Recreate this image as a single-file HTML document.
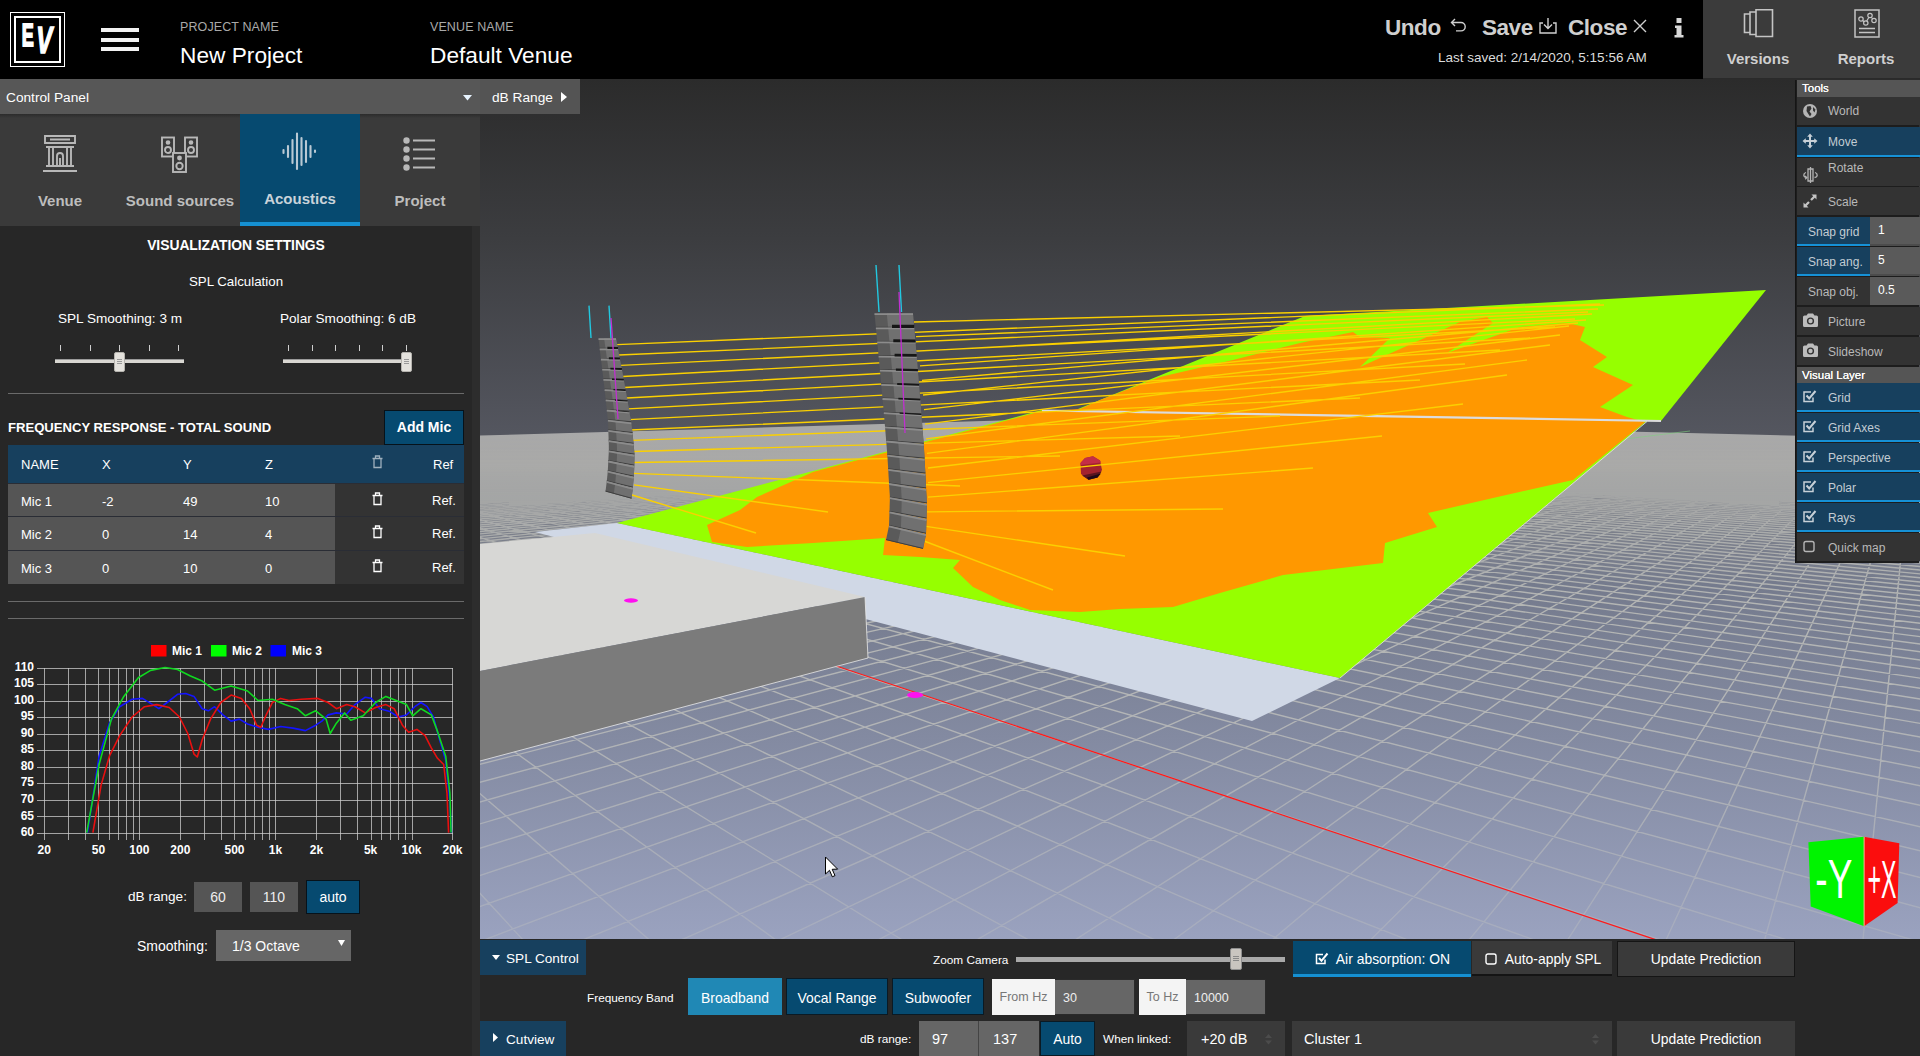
<!DOCTYPE html>
<html><head><meta charset="utf-8"><title>Preview</title>
<style>
*{box-sizing:border-box;margin:0;padding:0}
html,body{width:1920px;height:1056px;overflow:hidden;background:#272727;font-family:"Liberation Sans",sans-serif;color:#fff}
.abs{position:absolute}
#top{position:absolute;left:0;top:0;width:1920px;height:79px;background:#000}
#logo{position:absolute;left:10px;top:12px;width:55px;height:55px;border:1px solid #fff}
#logo i{position:absolute;left:3px;top:3px;right:3px;bottom:3px;border:2px solid #fff;display:block}
#burger b{position:absolute;left:101px;width:38px;height:4px;background:#f2f2f2;display:block}
.lbl{position:absolute;font-size:12.5px;color:#a9a9a9;letter-spacing:.1px;white-space:nowrap}
.val{position:absolute;font-size:22.7px;color:#fff;white-space:nowrap}
.act{position:absolute;top:15px;font-size:22.5px;font-weight:bold;color:#cfcfcf;white-space:nowrap;letter-spacing:-.45px}
#vr{position:absolute;left:1703px;top:0;width:217px;height:79px;background:#3b3b3b}
#vr span{position:absolute;top:50px;font-size:15px;font-weight:bold;color:#cfcfcf;white-space:nowrap;transform:translateX(-50%)}
#cp{position:absolute;left:0;top:79px;width:480px;height:35px;background:#575757;font-size:13.7px;line-height:37px;padding-left:6px}
#dbr{position:absolute;left:480px;top:79px;width:100px;height:35px;background:#545454;font-size:13.7px;line-height:37px;padding-left:12px}
#tabs{position:absolute;left:0;top:114px;width:480px;height:112px;background:#3a3a3a}
.tab{position:absolute;top:0;width:120px;height:112px}
.tab span{position:absolute;left:50%;top:78px;transform:translateX(-50%);font-weight:bold;font-size:15px;color:#bdbdbd;white-space:nowrap}
.tab.on{background:#064a70;border-bottom:4px solid #1590d2}
.tab.on span{top:76px;color:#c9d3da}
#left{position:absolute;left:0;top:226px;width:480px;height:830px;background:#272727}
#left .sb{position:absolute;left:472px;top:0;width:8px;height:830px;background:#2d2d2d}
.c{position:absolute;white-space:nowrap;transform:translateX(-50%)}
.t14{font-size:13.6px}
.hr{position:absolute;left:8px;width:456px;height:1px;background:#6a6a6a}
.trk{position:absolute;height:4px;background:#d9d7d2;border-top:1px solid #9a9a9a}
.tick{position:absolute;top:119px;width:1px;height:6px;background:#cfcfcf}
.thumb{position:absolute;width:11px;height:20px;background:#e4e2dd;border:1px solid #b5b3ae;border-radius:2px}
.thumb:after{content:"";position:absolute;left:2px;top:6px;width:5px;height:1px;background:#999;box-shadow:0 2px 0 #999,0 4px 0 #999}
#mic{position:absolute;left:8px;top:219px;width:456px}
#mic .h{position:absolute;left:0;top:0;width:456px;height:37.5px;background:#17405e}
#mic .r{position:absolute;left:0;width:456px;height:33.7px;background:#333;border-top:1px solid #2a2d35}
#mic .r i{position:absolute;left:0;top:0;width:327px;height:32.7px;background:#555;display:block}
#mic span{position:absolute;font-size:13px;white-space:nowrap;font-style:normal}
.btn{position:absolute;background:#064a70;border:1px solid #06121a;text-align:center;white-space:nowrap}
.inp{position:absolute;background:#555;text-align:center;font-size:14px;color:#eee}
#bot{position:absolute;left:480px;top:939px;width:1440px;height:117px;background:#272727}
#bot .tabb{position:absolute;left:0;height:35px;background:#17405e;font-size:13.6px;line-height:37px;white-space:nowrap}
#bot span.t{position:absolute;font-size:11.8px;white-space:nowrap}
.b2{position:absolute;white-space:nowrap;font-size:13.9px;text-align:center}
#tools{position:absolute;left:1795px;top:80px;width:124px;height:483px;background:#1d1d1d;border-left:1px solid #151515}
#tools .hd{position:absolute;left:1px;width:123px;height:16px;background:#555;font-size:11.5px;line-height:16px;padding-left:5px;color:#fff;text-shadow:0 0 .5px #fff}
#tools .it{position:absolute;left:1px;width:123px;height:28px;background:#333;font-size:12px;line-height:30.5px;color:#b9b9b9;padding-left:31px;white-space:nowrap}
#tools .it.on{background:#17405e;border-bottom:2px solid #1691d6;color:#c3ccd3;line-height:31px;height:29px}
#tools .it svg{position:absolute;left:5px;top:6px}
#tools .sn{padding-left:11px}
#tools .sn b{position:absolute;left:73px;top:0;width:50px;height:28px;background:#5a5a5a;color:#fff;font-weight:normal;padding-left:8px;line-height:26px}
</style></head><body>
<svg class="abs" style="left:480px;top:79px" width="1440" height="860" viewBox="480 79 1440 860">
<defs>
<linearGradient id="sky" x1="0" y1="79" x2="0" y2="434" gradientUnits="userSpaceOnUse"><stop offset="0" stop-color="#2b2b2b"/><stop offset=".45" stop-color="#3c3d40"/><stop offset="1" stop-color="#54565f"/></linearGradient>
<linearGradient id="gnd" x1="0" y1="434" x2="0" y2="939" gradientUnits="userSpaceOnUse"><stop offset="0" stop-color="#a9a9a9"/><stop offset=".06" stop-color="#a0a0a1"/><stop offset=".15" stop-color="#7f828a"/><stop offset=".3" stop-color="#757b8d"/><stop offset=".6" stop-color="#838aa1"/><stop offset="1" stop-color="#9aa2bf"/></linearGradient>
<linearGradient id="gfade" x1="0" y1="434" x2="0" y2="939" gradientUnits="userSpaceOnUse"><stop offset="0" stop-color="#fff" stop-opacity="0"/><stop offset=".06" stop-color="#fff" stop-opacity=".28"/><stop offset=".17" stop-color="#fff" stop-opacity=".66"/><stop offset=".33" stop-color="#fff" stop-opacity=".85"/><stop offset=".55" stop-color="#fff" stop-opacity=".8"/><stop offset="1" stop-color="#fff" stop-opacity=".32"/></linearGradient>
<mask id="gm" maskUnits="userSpaceOnUse" x="480" y="410" width="1440" height="529"><rect x="480" y="410" width="1440" height="529" fill="url(#gfade)"/></mask>
<clipPath id="gc"><polygon points="480,435.5 1078,418.4 1920,438.6 1920,939 480,939"/></clipPath>
<linearGradient id="box1" x1="0" y1="0" x2="1" y2="0"><stop offset="0" stop-color="#4a4a4a"/><stop offset=".35" stop-color="#6e6e6e"/><stop offset="1" stop-color="#5c5c5c"/></linearGradient>
<radialGradient id="sph" cx=".4" cy=".3" r=".8"><stop offset="0" stop-color="#d8474a"/><stop offset=".55" stop-color="#b52a26"/><stop offset="1" stop-color="#5a0c08"/></radialGradient>
</defs>
<rect x="480" y="79" width="1440" height="362" fill="url(#sky)"/>
<rect x="480" y="410" width="1440" height="529" fill="url(#gnd)" clip-path="url(#gc)"/>
<g clip-path="url(#gc)"><g mask="url(#gm)" stroke="#c8c8c0" stroke-width="1.4" fill="none" stroke-opacity=".88">
<path d="M38.5 416L578.6 1000M43.1 416L718.9 1000M47.8 416L859.3 1000M52.4 416L999.6 1000M57.1 416L1140.0 1000M61.7 416L1280.3 1000M66.4 416L1420.6 1000M71.0 416L1561.0 1000M75.7 416L1701.3 1000M80.3 416L1841.7 1000M85.0 416L1982.0 1000M89.6 416L2122.3 1000M94.3 416L2262.7 1000M98.9 416L2403.0 1000M103.6 416L2543.4 1000M108.2 416L2683.7 1000M112.8 416L2824.0 1000M117.5 416L2964.4 1000M122.1 416L3104.7 1000M126.8 416L3245.1 1000M131.4 416L3385.4 1000M136.1 416L3525.8 1000M140.7 416L3666.1 1000M145.4 416L3806.4 1000M150.0 416L3946.8 1000M154.7 416L4087.1 1000M159.3 416L4227.5 1000M164.0 416L4367.8 1000M168.6 416L4508.1 1000M173.3 416L4648.5 1000M177.9 416L4788.8 1000M182.6 416L4929.2 1000M187.2 416L5069.5 1000M191.8 416L5209.8 1000M196.5 416L5350.2 1000M201.1 416L5490.5 1000M205.8 416L5630.9 1000M210.4 416L5771.2 1000M215.1 416L5911.6 1000M219.7 416L6051.9 1000M224.4 416L6192.2 1000M229.0 416L6332.6 1000M233.7 416L6472.9 1000M238.3 416L6613.3 1000M243.0 416L6753.6 1000M247.6 416L6893.9 1000M252.3 416L7034.3 1000M256.9 416L7174.6 1000M261.6 416L7315.0 1000M266.2 416L7455.3 1000M270.8 416L7595.6 1000M275.5 416L7736.0 1000M280.1 416L7876.3 1000M284.8 416L8016.7 1000M289.4 416L8157.0 1000M294.1 416L8297.4 1000M298.7 416L8437.7 1000M303.4 416L8578.0 1000M308.0 416L8718.4 1000M312.7 416L8858.7 1000M317.3 416L8999.1 1000M322.0 416L9139.4 1000M326.6 416L9279.7 1000M331.3 416L9420.1 1000M335.9 416L9560.4 1000M340.6 416L9700.8 1000M345.2 416L9841.1 1000M349.8 416L9981.4 1000M354.5 416L10121.8 1000M359.1 416L10262.1 1000M363.8 416L10402.5 1000M368.4 416L10542.8 1000M373.1 416L10683.2 1000M377.7 416L10823.5 1000M382.4 416L10963.8 1000M387.0 416L11104.2 1000M391.7 416L11244.5 1000M396.3 416L11384.9 1000M401.0 416L11525.2 1000M405.6 416L11665.5 1000M410.3 416L11805.9 1000M414.9 416L11946.2 1000M419.6 416L12086.6 1000M424.2 416L12226.9 1000M428.8 416L12367.2 1000M433.5 416L12507.6 1000M438.1 416L12647.9 1000M442.8 416L12788.3 1000M447.4 416L12928.6 1000M452.1 416L13069.0 1000M456.7 416L13209.3 1000M461.4 416L13349.6 1000M466.0 416L13490.0 1000M470.7 416L13630.3 1000M475.3 416L13770.7 1000M480.0 416L13911.0 1000M484.6 416L14051.3 1000M489.3 416L14191.7 1000M493.9 416L14332.0 1000M498.6 416L14472.4 1000M503.2 416L14612.7 1000M507.8 416L14753.0 1000M512.5 416L14893.4 1000M517.1 416L15033.7 1000M521.8 416L15174.1 1000M526.4 416L15314.4 1000M531.1 416L15454.8 1000M535.7 416L15595.1 1000M540.4 416L15735.4 1000M545.0 416L15875.8 1000M549.7 416L16016.1 1000M554.3 416L16156.5 1000M559.0 416L16296.8 1000M563.6 416L16437.1 1000M568.3 416L16577.5 1000M572.9 416L16717.8 1000M577.6 416L16858.2 1000M582.2 416L16998.5 1000M586.8 416L17138.8 1000M591.5 416L17279.2 1000M596.1 416L17419.5 1000M600.8 416L17559.9 1000M605.4 416L17700.2 1000M610.1 416L17840.6 1000M614.7 416L17980.9 1000M619.4 416L18121.2 1000M624.0 416L18261.6 1000M628.7 416L18401.9 1000M633.3 416L18542.3 1000M638.0 416L18682.6 1000M642.6 416L18822.9 1000M647.3 416L18963.3 1000M651.9 416L19103.6 1000M656.6 416L19244.0 1000M661.2 416L19384.3 1000M665.8 416L19524.6 1000M670.5 416L19665.0 1000M675.1 416L19805.3 1000M679.8 416L19945.7 1000M684.4 416L20086.0 1000M689.1 416L20226.4 1000M693.7 416L20366.7 1000M698.4 416L20507.0 1000M703.0 416L20647.4 1000M707.7 416L20787.7 1000M712.3 416L20928.1 1000M717.0 416L21068.4 1000M721.6 416L21208.7 1000M726.3 416L21349.1 1000M730.9 416L21489.4 1000M735.6 416L21629.8 1000M740.2 416L21770.1 1000M744.8 416L21910.4 1000M749.5 416L22050.8 1000M754.1 416L22191.1 1000M758.8 416L22331.5 1000M763.4 416L22471.8 1000M768.1 416L22612.2 1000M772.7 416L22752.5 1000M777.4 416L22892.8 1000M782.0 416L23033.2 1000M786.7 416L23173.5 1000M791.3 416L23313.9 1000M796.0 416L23454.2 1000M800.6 416L23594.5 1000M805.3 416L23734.9 1000M809.9 416L23875.2 1000M814.6 416L24015.6 1000M819.2 416L24155.9 1000M823.8 416L24296.2 1000M828.5 416L24436.6 1000M833.1 416L24576.9 1000M837.8 416L24717.3 1000M842.4 416L24857.6 1000M847.1 416L24998.0 1000M851.7 416L25138.3 1000M856.4 416L25278.6 1000M861.0 416L25419.0 1000M865.7 416L25559.3 1000M870.3 416L25699.7 1000M875.0 416L25840.0 1000M879.6 416L25980.3 1000M884.3 416L26120.7 1000M888.9 416L26261.0 1000M893.6 416L26401.4 1000M898.2 416L26541.7 1000M902.8 416L26682.0 1000M907.5 416L26822.4 1000M912.1 416L26962.7 1000M916.8 416L27103.1 1000M921.4 416L27243.4 1000M926.1 416L27383.8 1000M930.7 416L27524.1 1000M935.4 416L27664.4 1000M940.0 416L27804.8 1000M944.7 416L27945.1 1000M949.3 416L28085.5 1000M954.0 416L28225.8 1000M958.6 416L28366.1 1000M963.3 416L28506.5 1000M967.9 416L28646.8 1000M972.6 416L28787.2 1000M977.2 416L28927.5 1000M981.8 416L29067.8 1000M986.5 416L29208.2 1000M991.1 416L29348.5 1000M995.8 416L29488.9 1000M1000.4 416L29629.2 1000M1005.1 416L29769.6 1000M1009.7 416L29909.9 1000M1014.4 416L30050.2 1000M1019.0 416L30190.6 1000M1023.7 416L30330.9 1000M1028.3 416L30471.3 1000M1033.0 416L30611.6 1000M1037.6 416L30751.9 1000M1042.3 416L30892.3 1000M1046.9 416L31032.6 1000M1051.6 416L31173.0 1000M1056.2 416L31313.3 1000M1060.8 416L31453.6 1000M1065.5 416L31594.0 1000M1070.1 416L31734.3 1000M1074.8 416L31874.7 1000M1079.4 416L32015.0 1000M1084.1 416L32155.4 1000M1088.7 416L32295.7 1000M1093.4 416L32436.0 1000M1098.0 416L32576.4 1000M1102.7 416L32716.7 1000M1107.3 416L32857.1 1000M1112.0 416L32997.4 1000M1116.6 416L33137.7 1000M1121.3 416L33278.1 1000M1125.9 416L33418.4 1000M1130.6 416L33558.8 1000M1135.2 416L33699.1 1000M1139.8 416L33839.4 1000M1144.5 416L33979.8 1000M1143.7 416L-21437.5 1000M1147.3 416L-21328.1 1000M1150.9 416L-21218.8 1000M1154.5 416L-21109.4 1000M1158.2 416L-21000.0 1000M1161.8 416L-20890.7 1000M1165.4 416L-20781.3 1000M1169.0 416L-20671.9 1000M1172.6 416L-20562.6 1000M1176.3 416L-20453.2 1000M1179.9 416L-20343.8 1000M1183.5 416L-20234.5 1000M1187.1 416L-20125.1 1000M1190.8 416L-20015.8 1000M1194.4 416L-19906.4 1000M1198.0 416L-19797.0 1000M1201.6 416L-19687.7 1000M1205.2 416L-19578.3 1000M1208.9 416L-19468.9 1000M1212.5 416L-19359.6 1000M1216.1 416L-19250.2 1000M1219.7 416L-19140.8 1000M1223.3 416L-19031.5 1000M1227.0 416L-18922.1 1000M1230.6 416L-18812.7 1000M1234.2 416L-18703.4 1000M1237.8 416L-18594.0 1000M1241.4 416L-18484.7 1000M1245.1 416L-18375.3 1000M1248.7 416L-18265.9 1000M1252.3 416L-18156.6 1000M1255.9 416L-18047.2 1000M1259.6 416L-17937.8 1000M1263.2 416L-17828.5 1000M1266.8 416L-17719.1 1000M1270.4 416L-17609.7 1000M1274.0 416L-17500.4 1000M1277.7 416L-17391.0 1000M1281.3 416L-17281.7 1000M1284.9 416L-17172.3 1000M1288.5 416L-17062.9 1000M1292.1 416L-16953.6 1000M1295.8 416L-16844.2 1000M1299.4 416L-16734.8 1000M1303.0 416L-16625.5 1000M1306.6 416L-16516.1 1000M1310.3 416L-16406.7 1000M1313.9 416L-16297.4 1000M1317.5 416L-16188.0 1000M1321.1 416L-16078.6 1000M1324.7 416L-15969.3 1000M1328.4 416L-15859.9 1000M1332.0 416L-15750.6 1000M1335.6 416L-15641.2 1000M1339.2 416L-15531.8 1000M1342.8 416L-15422.5 1000M1346.5 416L-15313.1 1000M1350.1 416L-15203.7 1000M1353.7 416L-15094.4 1000M1357.3 416L-14985.0 1000M1361.0 416L-14875.6 1000M1364.6 416L-14766.3 1000M1368.2 416L-14656.9 1000M1371.8 416L-14547.6 1000M1375.4 416L-14438.2 1000M1379.1 416L-14328.8 1000M1382.7 416L-14219.5 1000M1386.3 416L-14110.1 1000M1389.9 416L-14000.7 1000M1393.5 416L-13891.4 1000M1397.2 416L-13782.0 1000M1400.8 416L-13672.6 1000M1404.4 416L-13563.3 1000M1408.0 416L-13453.9 1000M1411.7 416L-13344.5 1000M1415.3 416L-13235.2 1000M1418.9 416L-13125.8 1000M1422.5 416L-13016.5 1000M1426.1 416L-12907.1 1000M1429.8 416L-12797.7 1000M1433.4 416L-12688.4 1000M1437.0 416L-12579.0 1000M1440.6 416L-12469.6 1000M1444.2 416L-12360.3 1000M1447.9 416L-12250.9 1000M1451.5 416L-12141.5 1000M1455.1 416L-12032.2 1000M1458.7 416L-11922.8 1000M1462.3 416L-11813.5 1000M1466.0 416L-11704.1 1000M1469.6 416L-11594.7 1000M1473.2 416L-11485.4 1000M1476.8 416L-11376.0 1000M1480.5 416L-11266.6 1000M1484.1 416L-11157.3 1000M1487.7 416L-11047.9 1000M1491.3 416L-10938.5 1000M1494.9 416L-10829.2 1000M1498.6 416L-10719.8 1000M1502.2 416L-10610.4 1000M1505.8 416L-10501.1 1000M1509.4 416L-10391.7 1000M1513.0 416L-10282.4 1000M1516.7 416L-10173.0 1000M1520.3 416L-10063.6 1000M1523.9 416L-9954.3 1000M1527.5 416L-9844.9 1000M1531.2 416L-9735.5 1000M1534.8 416L-9626.2 1000M1538.4 416L-9516.8 1000M1542.0 416L-9407.4 1000M1545.6 416L-9298.1 1000M1549.3 416L-9188.7 1000M1552.9 416L-9079.4 1000M1556.5 416L-8970.0 1000M1560.1 416L-8860.6 1000M1563.7 416L-8751.3 1000M1567.4 416L-8641.9 1000M1571.0 416L-8532.5 1000M1574.6 416L-8423.2 1000M1578.2 416L-8313.8 1000M1581.9 416L-8204.4 1000M1585.5 416L-8095.1 1000M1589.1 416L-7985.7 1000M1592.7 416L-7876.3 1000M1596.3 416L-7767.0 1000M1600.0 416L-7657.6 1000M1603.6 416L-7548.3 1000M1607.2 416L-7438.9 1000M1610.8 416L-7329.5 1000M1614.4 416L-7220.2 1000M1618.1 416L-7110.8 1000M1621.7 416L-7001.4 1000M1625.3 416L-6892.1 1000M1628.9 416L-6782.7 1000M1632.6 416L-6673.3 1000M1636.2 416L-6564.0 1000M1639.8 416L-6454.6 1000M1643.4 416L-6345.3 1000M1647.0 416L-6235.9 1000M1650.7 416L-6126.5 1000M1654.3 416L-6017.2 1000M1657.9 416L-5907.8 1000M1661.5 416L-5798.4 1000M1665.1 416L-5689.1 1000M1668.8 416L-5579.7 1000M1672.4 416L-5470.3 1000M1676.0 416L-5361.0 1000M1679.6 416L-5251.6 1000M1683.2 416L-5142.2 1000M1686.9 416L-5032.9 1000M1690.5 416L-4923.5 1000M1694.1 416L-4814.2 1000M1697.7 416L-4704.8 1000M1701.4 416L-4595.4 1000M1705.0 416L-4486.1 1000M1708.6 416L-4376.7 1000M1712.2 416L-4267.3 1000M1715.8 416L-4158.0 1000M1719.5 416L-4048.6 1000M1723.1 416L-3939.2 1000M1726.7 416L-3829.9 1000M1730.3 416L-3720.5 1000M1733.9 416L-3611.2 1000M1737.6 416L-3501.8 1000M1741.2 416L-3392.4 1000M1744.8 416L-3283.1 1000M1748.4 416L-3173.7 1000M1752.1 416L-3064.3 1000M1755.7 416L-2955.0 1000M1759.3 416L-2845.6 1000M1762.9 416L-2736.2 1000M1766.5 416L-2626.9 1000M1770.2 416L-2517.5 1000M1773.8 416L-2408.2 1000M1777.4 416L-2298.8 1000M1781.0 416L-2189.4 1000M1784.6 416L-2080.1 1000M1788.3 416L-1970.7 1000M1791.9 416L-1861.3 1000M1795.5 416L-1752.0 1000M1799.1 416L-1642.6 1000M1802.8 416L-1533.2 1000M1806.4 416L-1423.9 1000M1810.0 416L-1314.5 1000M1813.6 416L-1205.1 1000M1817.2 416L-1095.8 1000M1820.9 416L-986.4 1000M1824.5 416L-877.1 1000M1828.1 416L-767.7 1000M1831.7 416L-658.3 1000M1835.3 416L-549.0 1000M1839.0 416L-439.6 1000M1842.6 416L-330.2 1000M1846.2 416L-220.9 1000M1849.8 416L-111.5 1000M1853.5 416L-2.1 1000M1857.1 416L107.2 1000M1860.7 416L216.6 1000M1864.3 416L325.9 1000M1867.9 416L435.3 1000M1871.6 416L544.7 1000M1875.2 416L654.0 1000M1878.8 416L763.4 1000M1882.4 416L872.8 1000M1886.0 416L982.1 1000M1889.7 416L1091.5 1000M1893.3 416L1200.9 1000M1896.9 416L1310.2 1000M1900.5 416L1419.6 1000M1904.2 416L1529.0 1000M1907.8 416L1638.3 1000M1911.4 416L1747.7 1000M1915.0 416L1857.0 1000M1918.6 416L1966.4 1000"/>
</g></g>

<path d="M833.3 665.0 L1656.7 940.0" stroke="#ff1a1a" stroke-width="1.3"/>
<path d="M1560 447 L1690 431" stroke="#7fd07f" stroke-width="1" opacity=".6"/>
<polygon points="535.0,532.0 617.0,523.0 1340.0,678.0 1252.0,721.0" fill="#d0d8e6"/>
<polygon points="617.0,523.0 1042.0,410.0 1647.0,421.0 1340.0,678.0" fill="#96ff00"/>
<polygon points="1078.0,409.0 1305.0,316.0 1766.0,290.0 1661.0,421.0" fill="#96ff00"/>
<polygon points="813.0,472.0 1042.0,411.0 1080.0,409.0 1100.0,400.0 1160.0,377.0 1233.0,360.0 1300.0,343.0 1353.0,332.0 1360.0,337.0 1390.0,338.0 1360.0,367.0 1460.0,322.0 1487.0,317.0 1493.0,323.0 1447.0,353.0 1520.0,327.0 1567.0,323.0 1585.0,327.0 1580.0,340.0 1607.0,357.0 1593.0,367.0 1633.0,385.0 1600.0,407.0 1627.0,417.0 1645.0,422.0 1573.0,480.0 1493.0,498.0 1428.0,513.0 1437.0,527.0 1385.0,543.0 1383.0,563.0 1283.0,575.0 1220.0,593.0 1173.0,607.0 1120.0,609.0 1080.0,612.0 1030.0,610.0 1000.0,600.0 973.0,587.0 953.0,568.0 960.0,560.0 920.0,557.0 883.0,555.0 885.0,538.0 813.0,543.0 747.0,547.0 712.0,542.0 707.0,525.0 740.0,510.0 757.0,497.0" fill="#ff9800"/>
<path d="M1042 410.5 L1661 421" stroke="#dcdcdc" stroke-width="2.2"/>
<path d="M1647 421.5 L1340 678" stroke="#e8e8e0" stroke-width="1" opacity=".8"/>
<polygon points="480.0,544.0 595.0,533.0 865.0,597.0 480.0,671.0" fill="#d7d7d5"/>
<polygon points="480.0,671.0 865.0,597.0 868.0,658.0 480.0,761.0" fill="#7b7b7b"/>
<path d="M865 597 L868 658 L480 761" stroke="#e8e8e8" stroke-width="1" fill="none" opacity=".8"/>
<ellipse cx="631" cy="600.5" rx="7" ry="2.2" fill="#ff10f0"/>
<ellipse cx="915" cy="695" rx="8" ry="3" fill="#ff10f0"/>
<polygon points="1080.5,463 1085,458 1093,456.3 1100,460.5 1102,470 1097.5,477.5 1088.5,479.8 1081,474" fill="#a3222e"/>
<polygon points="1080.5,463 1085,458 1093,456.3 1100,460.5 1101,462.5 1080.6,465" fill="#c42e46"/>
<polygon points="1082,475.5 1101.6,471.5 1097.5,477.5 1088.5,479.8" fill="#5a1520"/>
<polygon points="1087,477.5 1101,473.5 1097.5,477.5 1088.5,479.8" fill="#1e0a18"/>
<path d="M617 344.6L1600 304M619 355L1588 312M621 365.4L1575 319M623 376.5L1555 327M625 387.5L1530 338M627 398L1500 350M628 408.8L1465 364M629 419.6L1420 380M631 430L1360 398M632 440.4L1280 416M633 451.5L1180 436M633 462.5L1060 456M634 473.3L960 486M634 484.8L828 512M632 495L756 533M914 322.0L1604 305M916 336.6L1598 309M918 351.2L1592 314M920 365.8L1586 320M922 380.4L1578 323M923 395.0L1569 326M924 409.6L1560 335M925 424.2L1550 345M926 438.8L1527 360M927 453.4L1507 375M928 468.0L1463 404M928 482.6L1382 436M928 497.2L1313 468M927 511.8L1223 509M926 526.4L1125 556M924 541.0L1053 590" stroke="#fbd000" stroke-width="1.35" fill="none"/>
<polygon points="598.5,338.5 616.0,338.5 618.0,348.7 599.7,348.7" fill="#5a5a5a"/><polygon points="604.1,338.5 616.0,338.5 618.0,348.7 605.6,348.7" fill="#707070"/><path d="M598.5 339.1 L616.0 339.1" stroke="#8c8c8c" stroke-width="1.8"/><path d="M599.7 348.3 L618.0 348.3" stroke="#3e3e3e" stroke-width="1"/><polygon points="599.7,348.7 618.0,348.8 619.9,359.0 600.9,358.9" fill="#5a5a5a"/><polygon points="605.6,348.7 618.0,348.8 619.9,359.0 607.0,358.9" fill="#707070"/><path d="M599.7 349.3 L618.0 349.4" stroke="#8c8c8c" stroke-width="1.8"/><path d="M600.9 358.5 L619.9 358.6" stroke="#3e3e3e" stroke-width="1"/><polygon points="607.4,346.8 618.0,346.9 618.0,349.1 607.4,349.1" fill="#161616"/><polygon points="600.9,358.9 619.9,359.2 621.9,369.4 602.2,369.1" fill="#5a5a5a"/><polygon points="607.0,359.0 619.9,359.2 621.9,369.4 608.5,369.2" fill="#707070"/><path d="M600.9 359.5 L619.9 359.8" stroke="#8c8c8c" stroke-width="1.8"/><path d="M602.2 368.7 L621.9 369.0" stroke="#3e3e3e" stroke-width="1"/><polygon points="608.9,357.3 619.9,357.5 619.9,359.5 608.9,359.3" fill="#161616"/><polygon points="602.2,369.1 621.9,369.6 623.8,379.8 603.4,379.3" fill="#5a5a5a"/><polygon points="608.5,369.3 621.9,369.6 623.8,379.8 609.9,379.5" fill="#707070"/><path d="M602.2 369.7 L621.9 370.2" stroke="#8c8c8c" stroke-width="1.8"/><path d="M603.4 378.9 L623.8 379.4" stroke="#3e3e3e" stroke-width="1"/><polygon points="610.4,367.8 621.9,368.1 621.9,369.9 610.4,369.6" fill="#161616"/><polygon points="603.4,379.3 623.8,380.1 625.7,390.3 604.6,389.5" fill="#5a5a5a"/><polygon points="609.9,379.6 623.8,380.1 625.7,390.3 611.3,389.8" fill="#707070"/><path d="M603.4 379.9 L623.8 380.7" stroke="#8c8c8c" stroke-width="1.8"/><path d="M604.6 389.1 L625.7 389.9" stroke="#3e3e3e" stroke-width="1"/><polygon points="612.0,378.4 623.8,378.8 623.8,380.4 612.0,379.9" fill="#161616"/><polygon points="604.6,389.5 625.7,390.6 627.6,400.8 605.7,399.7" fill="#5a5a5a"/><polygon points="611.3,389.9 625.7,390.6 627.6,400.8 612.7,400.1" fill="#707070"/><path d="M604.6 390.1 L625.7 391.2" stroke="#8c8c8c" stroke-width="1.8"/><path d="M605.7 399.3 L627.6 400.4" stroke="#3e3e3e" stroke-width="1"/><polygon points="613.5,389.0 625.7,389.6 625.7,390.9 613.5,390.3" fill="#161616"/><polygon points="605.7,399.7 627.6,401.3 629.4,411.5 606.8,409.9" fill="#5a5a5a"/><polygon points="612.7,400.2 627.6,401.3 629.4,411.5 614.0,410.4" fill="#707070"/><path d="M605.7 400.3 L627.6 401.9" stroke="#8c8c8c" stroke-width="1.8"/><path d="M606.8 409.5 L629.4 411.1" stroke="#3e3e3e" stroke-width="1"/><polygon points="614.9,399.6 627.6,400.5 627.6,401.6 614.9,400.7" fill="#161616"/><polygon points="606.8,409.9 629.4,411.9 631.3,422.1 607.9,420.1" fill="#5a5a5a"/><polygon points="614.0,410.5 629.4,411.9 631.3,422.1 615.4,420.7" fill="#707070"/><path d="M606.8 410.5 L629.4 412.5" stroke="#8c8c8c" stroke-width="1.8"/><path d="M607.9 419.7 L631.3 421.7" stroke="#3e3e3e" stroke-width="1"/><polygon points="616.3,410.2 629.4,411.4 629.4,412.2 616.3,411.1" fill="#161616"/><polygon points="607.9,420.1 631.3,422.7 632.5,432.9 608.3,430.3" fill="#5a5a5a"/><polygon points="615.4,420.9 631.3,422.7 632.5,432.9 616.1,431.1" fill="#707070"/><path d="M607.9 420.7 L631.3 423.3" stroke="#8c8c8c" stroke-width="1.8"/><path d="M608.3 429.9 L632.5 432.5" stroke="#3e3e3e" stroke-width="1"/><polygon points="608.3,430.3 632.5,433.5 633.6,443.7 608.7,440.5" fill="#5a5a5a"/><polygon points="616.1,431.3 632.5,433.5 633.6,443.7 616.7,441.5" fill="#707070"/><path d="M608.3 430.9 L632.5 434.1" stroke="#8c8c8c" stroke-width="1.8"/><path d="M608.7 440.1 L633.6 443.3" stroke="#3e3e3e" stroke-width="1"/><polygon points="608.7,440.5 633.6,444.3 634.5,454.5 608.9,450.7" fill="#5a5a5a"/><polygon points="616.7,441.7 633.6,444.3 634.5,454.5 617.1,451.9" fill="#707070"/><path d="M608.7 441.1 L633.6 444.9" stroke="#8c8c8c" stroke-width="1.8"/><path d="M608.9 450.3 L634.5 454.1" stroke="#3e3e3e" stroke-width="1"/><polygon points="608.9,450.7 634.5,455.3 634.3,465.5 608.3,460.9" fill="#5a5a5a"/><polygon points="617.1,452.2 634.5,455.3 634.3,465.5 616.7,462.4" fill="#707070"/><path d="M608.9 451.3 L634.5 455.9" stroke="#8c8c8c" stroke-width="1.8"/><path d="M608.3 460.5 L634.3 465.1" stroke="#3e3e3e" stroke-width="1"/><polygon points="608.3,460.9 634.3,466.3 633.8,476.5 607.8,471.1" fill="#5a5a5a"/><polygon points="616.7,462.6 634.3,466.3 633.8,476.5 616.1,472.8" fill="#707070"/><path d="M608.3 461.5 L634.3 466.9" stroke="#8c8c8c" stroke-width="1.8"/><path d="M607.8 470.7 L633.8 476.1" stroke="#3e3e3e" stroke-width="1"/><polygon points="607.8,471.1 633.8,477.3 632.8,487.5 606.8,481.3" fill="#5a5a5a"/><polygon points="616.1,473.1 633.8,477.3 632.8,487.5 615.2,483.3" fill="#707070"/><path d="M607.8 471.7 L633.8 477.9" stroke="#8c8c8c" stroke-width="1.8"/><path d="M606.8 480.9 L632.8 487.1" stroke="#3e3e3e" stroke-width="1"/><polygon points="606.8,481.3 632.8,488.4 631.5,498.6 605.5,491.5" fill="#5a5a5a"/><polygon points="615.2,483.6 632.8,488.4 631.5,498.6 613.8,493.8" fill="#707070"/><path d="M606.8 481.9 L632.8 489.0" stroke="#8c8c8c" stroke-width="1.8"/><path d="M605.5 491.1 L631.5 498.2" stroke="#3e3e3e" stroke-width="1"/>
<polygon points="874.5,313.5 913.0,313.5 914.2,327.7 875.9,327.7" fill="#5a5a5a"/><polygon points="886.8,313.5 913.0,313.5 914.2,327.7 888.1,327.7" fill="#707070"/><path d="M874.5 314.1 L913.0 314.1" stroke="#8c8c8c" stroke-width="1.8"/><path d="M875.9 327.3 L914.2 327.3" stroke="#3e3e3e" stroke-width="1"/><polygon points="875.9,327.7 914.2,327.8 915.5,341.9 877.2,341.8" fill="#5a5a5a"/><polygon points="888.1,327.7 914.2,327.8 915.5,341.9 889.5,341.9" fill="#707070"/><path d="M875.9 328.3 L914.2 328.4" stroke="#8c8c8c" stroke-width="1.8"/><path d="M877.2 341.4 L915.5 341.5" stroke="#3e3e3e" stroke-width="1"/><polygon points="892.0,324.7 914.2,324.7 914.2,328.1 892.0,328.0" fill="#161616"/><polygon points="877.2,341.8 915.5,342.1 916.7,356.3 878.6,356.0" fill="#5a5a5a"/><polygon points="889.5,341.9 915.5,342.1 916.7,356.3 890.8,356.1" fill="#707070"/><path d="M877.2 342.4 L915.5 342.7" stroke="#8c8c8c" stroke-width="1.8"/><path d="M878.6 355.6 L916.7 355.9" stroke="#3e3e3e" stroke-width="1"/><polygon points="893.3,339.2 915.5,339.4 915.5,342.4 893.3,342.2" fill="#161616"/><polygon points="878.6,356.0 916.7,356.5 917.9,370.7 879.9,370.1" fill="#5a5a5a"/><polygon points="890.8,356.1 916.7,356.5 917.9,370.7 892.1,370.3" fill="#707070"/><path d="M878.6 356.6 L916.7 357.1" stroke="#8c8c8c" stroke-width="1.8"/><path d="M879.9 369.7 L917.9 370.3" stroke="#3e3e3e" stroke-width="1"/><polygon points="894.6,353.8 916.7,354.1 916.7,356.8 894.6,356.5" fill="#161616"/><polygon points="879.9,370.1 917.9,371.0 919.1,385.1 881.2,384.3" fill="#5a5a5a"/><polygon points="892.1,370.4 917.9,371.0 919.1,385.1 893.4,384.6" fill="#707070"/><path d="M879.9 370.7 L917.9 371.6" stroke="#8c8c8c" stroke-width="1.8"/><path d="M881.2 383.9 L919.1 384.7" stroke="#3e3e3e" stroke-width="1"/><polygon points="895.9,368.4 917.9,368.9 917.9,371.3 895.9,370.8" fill="#161616"/><polygon points="881.2,384.3 919.1,385.5 920.3,399.7 882.5,398.4" fill="#5a5a5a"/><polygon points="893.4,384.7 919.1,385.5 920.3,399.7 894.6,398.8" fill="#707070"/><path d="M881.2 384.9 L919.1 386.1" stroke="#8c8c8c" stroke-width="1.8"/><path d="M882.5 398.0 L920.3 399.3" stroke="#3e3e3e" stroke-width="1"/><polygon points="897.2,383.1 919.1,383.8 919.1,385.8 897.2,385.1" fill="#161616"/><polygon points="882.5,398.4 920.3,400.1 921.4,414.3 883.8,412.6" fill="#5a5a5a"/><polygon points="894.6,399.0 920.3,400.1 921.4,414.3 895.8,413.1" fill="#707070"/><path d="M882.5 399.0 L920.3 400.7" stroke="#8c8c8c" stroke-width="1.8"/><path d="M883.8 412.2 L921.4 413.9" stroke="#3e3e3e" stroke-width="1"/><polygon points="898.4,397.8 920.3,398.8 920.3,400.4 898.4,399.4" fill="#161616"/><polygon points="883.8,412.6 921.4,414.8 922.5,428.9 885.0,426.8" fill="#5a5a5a"/><polygon points="895.8,413.3 921.4,414.8 922.5,428.9 897.0,427.5" fill="#707070"/><path d="M883.8 413.2 L921.4 415.4" stroke="#8c8c8c" stroke-width="1.8"/><path d="M885.0 426.4 L922.5 428.5" stroke="#3e3e3e" stroke-width="1"/><polygon points="899.6,412.5 921.4,413.8 921.4,415.1 899.6,413.8" fill="#161616"/><polygon points="885.0,426.8 922.5,429.5 923.7,443.7 886.2,440.9" fill="#5a5a5a"/><polygon points="897.0,427.6 922.5,429.5 923.7,443.7 898.2,441.8" fill="#707070"/><path d="M885.0 427.4 L922.5 430.1" stroke="#8c8c8c" stroke-width="1.8"/><path d="M886.2 440.5 L923.7 443.3" stroke="#3e3e3e" stroke-width="1"/><polygon points="886.2,440.9 923.7,444.3 924.6,458.5 887.3,455.1" fill="#5a5a5a"/><polygon points="898.2,442.0 923.7,444.3 924.6,458.5 899.3,456.2" fill="#707070"/><path d="M886.2 441.5 L923.7 444.9" stroke="#8c8c8c" stroke-width="1.8"/><path d="M887.3 454.7 L924.6 458.1" stroke="#3e3e3e" stroke-width="1"/><polygon points="887.3,455.1 924.6,459.2 925.4,473.4 888.2,469.2" fill="#5a5a5a"/><polygon points="899.3,456.4 924.6,459.2 925.4,473.4 900.1,470.5" fill="#707070"/><path d="M887.3 455.7 L924.6 459.8" stroke="#8c8c8c" stroke-width="1.8"/><path d="M888.2 468.8 L925.4 473.0" stroke="#3e3e3e" stroke-width="1"/><polygon points="888.2,469.2 925.4,474.2 926.1,488.3 889.0,483.4" fill="#5a5a5a"/><polygon points="900.1,470.8 925.4,474.2 926.1,488.3 900.9,485.0" fill="#707070"/><path d="M888.2 469.8 L925.4 474.8" stroke="#8c8c8c" stroke-width="1.8"/><path d="M889.0 483.0 L926.1 487.9" stroke="#3e3e3e" stroke-width="1"/><polygon points="889.0,483.4 926.1,489.2 926.9,503.3 889.9,497.5" fill="#5a5a5a"/><polygon points="900.9,485.2 926.1,489.2 926.9,503.3 901.7,499.4" fill="#707070"/><path d="M889.0 484.0 L926.1 489.8" stroke="#8c8c8c" stroke-width="1.8"/><path d="M889.9 497.1 L926.9 502.9" stroke="#3e3e3e" stroke-width="1"/><polygon points="889.9,497.5 926.9,504.3 926.5,518.4 889.5,511.7" fill="#5a5a5a"/><polygon points="901.7,499.7 926.9,504.3 926.5,518.4 901.4,513.8" fill="#707070"/><path d="M889.9 498.1 L926.9 504.9" stroke="#8c8c8c" stroke-width="1.8"/><path d="M889.5 511.3 L926.5 518.0" stroke="#3e3e3e" stroke-width="1"/><polygon points="889.5,511.7 926.5,519.4 926.0,533.6 889.0,525.8" fill="#5a5a5a"/><polygon points="901.4,514.2 926.5,519.4 926.0,533.6 900.9,528.3" fill="#707070"/><path d="M889.5 512.3 L926.5 520.0" stroke="#8c8c8c" stroke-width="1.8"/><path d="M889.0 525.4 L926.0 533.2" stroke="#3e3e3e" stroke-width="1"/><polygon points="889.0,525.8 926.0,534.6 923.0,548.8 886.0,540.0" fill="#5a5a5a"/><polygon points="900.9,528.7 926.0,534.6 923.0,548.8 897.8,542.8" fill="#707070"/><path d="M889.0 526.4 L926.0 535.2" stroke="#8c8c8c" stroke-width="1.8"/><path d="M886.0 539.6 L923.0 548.4" stroke="#3e3e3e" stroke-width="1"/>
<path d="M589 305.6 L591 338 M609 305.6 L611 338 M876 265 L879 312 M899 265 L901.5 312" stroke="#22c8e0" stroke-width="1.4" fill="none"/>
<path d="M611 318 L618 419 M899 292 L905 433" stroke="#c030d0" stroke-width="1.3" fill="none"/>
<polygon points="1808.4,842.2 1864.1,836.8 1864.1,926.3 1810.7,906.4" fill="#00f400"/>
<polygon points="1864.1,836.8 1899.3,843.3 1897.6,903.0 1864.1,926.3" fill="#fb0d0d"/>
<path d="M1864.1 836.8 V926.3" stroke="#ffb090" stroke-width="1"/>
<text transform="translate(1833.8 897.5) scale(.66 1)" text-anchor="middle" font-family="Liberation Sans,sans-serif" font-size="56" fill="#fff">-Y</text>
<text transform="translate(1882 898) scale(.43 1)" text-anchor="middle" font-family="Liberation Sans,sans-serif" font-size="54" fill="#fff">+X</text>
<path transform="translate(0 -1.5)" d="M825.5 858.5 V875.5 L829.5 871.8 L832.3 878.3 L835 877.1 L832.2 870.8 L837.6 870.6 Z" fill="#fff" stroke="#000" stroke-width="1"/>
</svg>
<div id="top">
 <div id="logo"><i></i>
  <svg class="abs" style="left:8px;top:8px" width="42" height="38" viewBox="0 0 42 38"><g font-family="Liberation Sans,sans-serif" font-weight="bold" fill="#fff" stroke="#fff" stroke-linejoin="miter"><text x="2.8" y="24.9" font-size="31" textLength="12" lengthAdjust="spacingAndGlyphs" stroke-width="1.8">E</text><text x="17.2" y="32.2" font-size="36" font-style="italic" textLength="16" lengthAdjust="spacingAndGlyphs" stroke-width="1.5">V</text></g></svg>
 </div>
 <div id="burger"><b style="top:28px"></b><b style="top:37.5px"></b><b style="top:47px"></b></div>
 <div class="lbl" style="left:180px;top:20px">PROJECT NAME</div>
 <div class="val" style="left:180px;top:42px">New Project</div>
 <div class="lbl" style="left:430px;top:20px">VENUE NAME</div>
 <div class="val" style="left:430px;top:42px">Default Venue</div>
 <div class="act" style="left:1385px">Undo</div>
 <svg class="abs" style="left:1449px;top:17px" width="20" height="18" viewBox="0 0 20 18"><path d="M6 2 L2.5 5.5 L6 9 M2.5 5.5 H12 a4.2 4.2 0 0 1 0 8.4 H7" fill="none" stroke="#cfcfcf" stroke-width="1.4"/></svg>
 <div class="act" style="left:1482px">Save</div>
 <svg class="abs" style="left:1538px;top:16px" width="20" height="20" viewBox="0 0 20 20"><path d="M5 7 H2 V17 H18 V7 H15 M10 2 V12 M6 8.5 L10 12.5 L14 8.5" fill="none" stroke="#cfcfcf" stroke-width="1.4"/></svg>
 <div class="act" style="left:1568px">Close</div>
 <svg class="abs" style="left:1632px;top:18px" width="16" height="16" viewBox="0 0 16 16"><path d="M2 2 L14 14 M14 2 L2 14" fill="none" stroke="#cfcfcf" stroke-width="1.4"/></svg>
 <svg class="abs" style="left:1673px;top:17px" width="12" height="22" viewBox="0 0 12 22"><rect x="3.5" y="1" width="5" height="5" fill="#d8d8d8"/><path d="M2 8.5 H8.5 V18 H10.5 V20.5 H1.5 V18 H3.5 V11 H2 Z" fill="#d8d8d8"/></svg>
 <div class="abs" style="left:1438px;top:50px;font-size:13.5px;color:#dcdcdc;white-space:nowrap">Last saved: 2/14/2020, 5:15:56 AM</div>
 <div id="vr"><div class="abs" style="left:0;top:78px;width:217px;height:1px;background:#2a2a2a"></div>
  <svg class="abs" style="left:37px;top:8px" width="36" height="32" viewBox="0 0 36 32"><path d="M16 1.8 H32.5 V28.5 H16 Z M15.5 4 H10 V26.5 H15.5 M9.5 6 H4.5 V24.5 H9.5" fill="none" stroke="#c4c4c4" stroke-width="1.6"/></svg>
  <span style="left:55px">Versions</span>
  <svg class="abs" style="left:149px;top:8px" width="30" height="32" viewBox="0 0 30 32"><path d="M3 2 H27 V29 H3 Z M7 20.5 H23 M7 24.5 H23" fill="none" stroke="#c4c4c4" stroke-width="1.5"/><path d="M9.5 11.5 L13.5 15 L18 7.5 L21.5 12" fill="none" stroke="#c4c4c4" stroke-width="1.2"/><circle cx="9" cy="11" r="2.2" fill="#3b3b3b" stroke="#c4c4c4" stroke-width="1.2"/><circle cx="13.8" cy="15" r="2.2" fill="#3b3b3b" stroke="#c4c4c4" stroke-width="1.2"/><circle cx="18" cy="7.5" r="2.2" fill="#3b3b3b" stroke="#c4c4c4" stroke-width="1.2"/><circle cx="22" cy="12.5" r="2.2" fill="#3b3b3b" stroke="#c4c4c4" stroke-width="1.2"/></svg>
  <span style="left:163px">Reports</span>
 </div>
</div>
<div id="cp">Control Panel<svg class="abs" style="left:463px;top:16px" width="10" height="6"><path d="M0 0 H9 L4.5 5.5 Z" fill="#e8f4ff"/></svg></div>
<div id="dbr">dB Range<svg class="abs" style="left:81px;top:13px" width="7" height="10"><path d="M0 0 L6 5 L0 10 Z" fill="#fff"/></svg></div>
<div id="tabs"><div class="abs" style="left:0;top:0;width:480px;height:4px;background:linear-gradient(#2c2c2c,#3a3a3a)"></div>
 <div class="tab" style="left:0"><svg class="abs" style="left:41px;top:19.5px" width="38" height="38" viewBox="0 0 38 38"><g fill="none" stroke="#b8b8b8" stroke-width="1.9"><path d="M4 2 H34 V9 H4 Z M9 5.5 H29 M2 37 H36 M5 32 H33 M5 13 H33"/><path d="M8 13 V32 M12 13 V32 M26 13 V32 M30 13 V32 M16 32 V22 a3 3 0 0 1 6 0 V32 M19 24 V32"/></g></svg><span>Venue</span></div>
 <div class="tab" style="left:120px"><svg class="abs" style="left:41px;top:21.5px" width="38" height="38" viewBox="0 0 38 38"><g fill="none" stroke="#b8b8b8" stroke-width="1.9"><rect x="1" y="1.5" width="12" height="19"/><rect x="24" y="1.5" width="12" height="19"/><rect x="12" y="17" width="13" height="19" fill="#3a3a3a"/><circle cx="7" cy="6.5" r="1.4" fill="#b8b8b8"/><circle cx="7" cy="14" r="3"/><circle cx="30" cy="6.5" r="1.4" fill="#b8b8b8"/><circle cx="30" cy="14" r="3"/><circle cx="18.5" cy="22" r="1.5" fill="#b8b8b8"/><circle cx="18.5" cy="30" r="3.2"/></g></svg><span>Sound sources</span></div>
 <div class="tab on" style="left:240px"><svg class="abs" style="left:42px;top:18px" width="36" height="40" viewBox="0 0 36 40"><g stroke="#b9c9d4" stroke-width="2.1" stroke-linecap="round"><path d="M1.5 18 V21 M6 14 V25 M10.5 8 V31 M15 1.5 V37 M19.5 6 V33 M24 9 V30 M28.5 14 V25 M33 18.5 V20"/></g></svg><span>Acoustics</span></div>
 <div class="tab" style="left:360px"><svg class="abs" style="left:43px;top:23px" width="34" height="34" viewBox="0 0 34 34"><g fill="#b8b8b8"><circle cx="3.5" cy="3.5" r="3.2"/><circle cx="3.5" cy="12.5" r="3.2"/><circle cx="3.5" cy="21.5" r="3.2"/><circle cx="3.5" cy="30.5" r="3.2"/><rect x="10" y="2.5" width="22" height="2"/><rect x="10" y="11.5" width="22" height="2"/><rect x="10" y="20.5" width="22" height="2"/><rect x="10" y="29.5" width="22" height="2"/></g></svg><span>Project</span></div>
</div>
<div id="left">
 <div class="sb"></div>
 <div class="c" style="left:236px;top:11px;font-size:13.9px;font-weight:bold;letter-spacing:-.05px">VISUALIZATION SETTINGS</div>
 <div class="c" style="left:236px;top:48px;font-size:13.3px">SPL Calculation</div>
 <div class="c t14" style="left:120px;top:85px">SPL Smoothing: 3 m</div>
 <div class="c t14" style="left:348px;top:85px">Polar Smoothing: 6 dB</div>
 <div class="trk" style="left:55px;top:133px;width:129px"></div>
 <div class="tick" style="left:60px"></div><div class="tick" style="left:90px"></div><div class="tick" style="left:119px"></div><div class="tick" style="left:149px"></div><div class="tick" style="left:178px"></div>
 <div class="thumb" style="left:114px;top:126px"></div>
 <div class="trk" style="left:283px;top:133px;width:129px"></div>
 <div class="tick" style="left:288px"></div><div class="tick" style="left:312px"></div><div class="tick" style="left:335px"></div><div class="tick" style="left:359px"></div><div class="tick" style="left:382px"></div><div class="tick" style="left:406px"></div>
 <div class="thumb" style="left:401px;top:126px"></div>
 <div class="hr" style="top:167px"></div>
 <div class="abs" style="left:8px;top:194px;font-size:13.1px;font-weight:bold;white-space:nowrap">FREQUENCY RESPONSE - TOTAL SOUND</div>
 <div class="btn" style="left:384px;top:184px;width:80px;height:35px;line-height:33px;font-size:14px;font-weight:bold">Add Mic</div>
 <div id="mic">
  <div class="h"><span style="left:13px;top:12px">NAME</span><span style="left:94px;top:12px">X</span><span style="left:175px;top:12px">Y</span><span style="left:257px;top:12px">Z</span><span style="left:425px;top:12px">Ref</span>
   <svg class="abs" style="left:364px;top:10px" width="11" height="14" viewBox="0 0 11 14"><path d="M2 3.5 V12.5 H9 V3.5 M0.5 3.5 H10.5 M3.5 3 V1 H7.5 V3" fill="none" stroke="#9fb0bd" stroke-width="1.3"/></svg></div>
  <div class="r" style="top:37.5px"><i></i><span style="left:13px;top:10px">Mic 1</span><span style="left:94px;top:10px">-2</span><span style="left:175px;top:10px">49</span><span style="left:257px;top:10px">10</span><span style="left:424px;top:9px">Ref.</span>
   <svg class="abs" style="left:364px;top:8px" width="11" height="14" viewBox="0 0 11 14"><path d="M2 3.5 V12.5 H9 V3.5 M0.5 3.5 H10.5 M3.5 3 V1 H7.5 V3" fill="none" stroke="#fff" stroke-width="1.3"/></svg></div>
  <div class="r" style="top:71.2px"><i></i><span style="left:13px;top:10px">Mic 2</span><span style="left:94px;top:10px">0</span><span style="left:175px;top:10px">14</span><span style="left:257px;top:10px">4</span><span style="left:424px;top:9px">Ref.</span>
   <svg class="abs" style="left:364px;top:8px" width="11" height="14" viewBox="0 0 11 14"><path d="M2 3.5 V12.5 H9 V3.5 M0.5 3.5 H10.5 M3.5 3 V1 H7.5 V3" fill="none" stroke="#fff" stroke-width="1.3"/></svg></div>
  <div class="r" style="top:104.9px"><i></i><span style="left:13px;top:10px">Mic 3</span><span style="left:94px;top:10px">0</span><span style="left:175px;top:10px">10</span><span style="left:257px;top:10px">0</span><span style="left:424px;top:9px">Ref.</span>
   <svg class="abs" style="left:364px;top:8px" width="11" height="14" viewBox="0 0 11 14"><path d="M2 3.5 V12.5 H9 V3.5 M0.5 3.5 H10.5 M3.5 3 V1 H7.5 V3" fill="none" stroke="#fff" stroke-width="1.3"/></svg></div>
 </div>
 <div class="hr" style="top:375px"></div>
 <div class="hr" style="top:392px"></div>
 <svg class="abs" style="left:0;top:0" width="480" height="830" viewBox="0 226 480 830">
<g stroke="#cfcfcf" stroke-width="1" stroke-opacity=".75" shape-rendering="crispEdges">
<path d="M37 833.5 H452.5"/>
<path d="M37 816.5 H452.5"/>
<path d="M37 800.5 H452.5"/>
<path d="M37 783.5 H452.5"/>
<path d="M37 767.5 H452.5"/>
<path d="M37 750.5 H452.5"/>
<path d="M37 734.5 H452.5"/>
<path d="M37 717.5 H452.5"/>
<path d="M37 701.5 H452.5"/>
<path d="M37 684.5 H452.5"/>
<path d="M37 668.5 H452.5"/>
<path d="M44.5 667.5 V840"/>
<path d="M68.5 667.5 V840"/>
<path d="M85.5 667.5 V840"/>
<path d="M98.5 667.5 V840"/>
<path d="M109.5 667.5 V840"/>
<path d="M118.5 667.5 V840"/>
<path d="M126.5 667.5 V840"/>
<path d="M133.5 667.5 V840"/>
<path d="M139.5 667.5 V840"/>
<path d="M180.5 667.5 V840"/>
<path d="M204.5 667.5 V840"/>
<path d="M221.5 667.5 V840"/>
<path d="M234.5 667.5 V840"/>
<path d="M245.5 667.5 V840"/>
<path d="M254.5 667.5 V840"/>
<path d="M262.5 667.5 V840"/>
<path d="M269.5 667.5 V840"/>
<path d="M275.5 667.5 V840"/>
<path d="M316.5 667.5 V840"/>
<path d="M340.5 667.5 V840"/>
<path d="M357.5 667.5 V840"/>
<path d="M371.5 667.5 V840"/>
<path d="M381.5 667.5 V840"/>
<path d="M390.5 667.5 V840"/>
<path d="M398.5 667.5 V840"/>
<path d="M405.5 667.5 V840"/>
<path d="M412.5 667.5 V840"/>
<path d="M452.5 667.5 V840"/>
</g>
<g font-family="Liberation Sans,sans-serif" font-weight="bold" font-size="12" fill="#fff">
<text x="34" y="836.0" text-anchor="end">60</text>
<text x="34" y="819.5" text-anchor="end">65</text>
<text x="34" y="802.9" text-anchor="end">70</text>
<text x="34" y="786.4" text-anchor="end">75</text>
<text x="34" y="769.9" text-anchor="end">80</text>
<text x="34" y="753.4" text-anchor="end">85</text>
<text x="34" y="736.8" text-anchor="end">90</text>
<text x="34" y="720.3" text-anchor="end">95</text>
<text x="34" y="703.8" text-anchor="end">100</text>
<text x="34" y="687.2" text-anchor="end">105</text>
<text x="34" y="670.7" text-anchor="end">110</text>
<text x="44.2" y="854" text-anchor="middle">20</text>
<text x="98.4" y="854" text-anchor="middle">50</text>
<text x="139.3" y="854" text-anchor="middle">100</text>
<text x="180.3" y="854" text-anchor="middle">200</text>
<text x="234.5" y="854" text-anchor="middle">500</text>
<text x="275.4" y="854" text-anchor="middle">1k</text>
<text x="316.4" y="854" text-anchor="middle">2k</text>
<text x="370.6" y="854" text-anchor="middle">5k</text>
<text x="411.5" y="854" text-anchor="middle">10k</text>
<text x="452.5" y="854" text-anchor="middle">20k</text>
<rect x="151" y="645" width="15.5" height="11.5" fill="#f00"/><text x="172" y="655">Mic 1</text>
<rect x="211" y="645" width="15.5" height="11.5" fill="#0f0"/><text x="232" y="655">Mic 2</text>
<rect x="270.5" y="645" width="15.5" height="11.5" fill="#00f"/><text x="292" y="655">Mic 3</text>
</g>
<path d="M87.5 832.6 L99.1 756.2 L109.4 723.2 L119.7 706.7 L132.1 699.2 L142.4 698.4 L152.7 704.6 L158.9 708.7 L167.2 702.5 L177.5 694.3 L185.7 693.5 L194.0 696.4 L202.2 708.7 L208.4 710.8 L214.6 706.7 L222.9 714.9 L231.1 721.1 L239.4 719.1 L247.6 724.0 L258.0 727.3 L268.3 729.4 L280.7 726.5 L293.0 728.1 L305.4 730.6 L315.7 725.2 L321.9 721.1 L328.1 714.9 L336.4 712.9 L346.7 714.1 L354.9 704.6 L365.3 697.2 L371.5 698.4 L379.7 708.7 L390.0 711.6 L398.3 717.0 L406.5 714.9 L414.8 706.7 L421.0 702.5 L427.2 706.7 L433.4 717.0 L439.6 739.7 L445.7 760.3 L449.9 801.6 L451.5 832.6" fill="none" stroke="#1414ff" stroke-width="1.6" stroke-linejoin="round"/>
<path d="M92.9 832.6 L101.1 785.1 L109.4 756.2 L119.7 735.6 L132.1 717.0 L144.5 706.7 L156.8 704.6 L169.2 707.5 L179.5 717.0 L187.8 733.5 L194.0 754.1 L197.3 757.0 L202.2 739.7 L210.5 719.1 L220.8 702.5 L231.1 695.1 L241.4 698.4 L249.7 708.7 L256.7 725.2 L260.8 727.3 L266.2 714.9 L272.4 702.5 L280.7 698.4 L288.9 700.5 L301.3 699.2 L317.8 698.4 L328.1 702.5 L336.4 708.7 L346.7 704.6 L354.9 706.7 L365.3 712.9 L375.6 707.5 L385.9 704.6 L394.2 708.7 L402.4 725.2 L408.6 732.3 L416.9 729.4 L425.1 735.6 L431.3 747.9 L437.5 758.3 L443.7 764.5 L447.0 793.3 L448.6 832.6" fill="none" stroke="#e81010" stroke-width="1.6" stroke-linejoin="round"/>
<path d="M86.7 832.6 L99.1 764.5 L111.4 719.1 L123.8 696.4 L138.3 677.8 L150.6 670.4 L165.1 667.5 L177.5 669.5 L189.9 675.7 L202.2 681.1 L214.6 690.2 L231.1 686.0 L247.6 691.0 L258.0 700.5 L272.4 699.2 L284.8 704.6 L297.2 708.7 L305.4 715.8 L315.7 710.8 L326.1 719.1 L330.2 733.5 L336.4 723.2 L344.6 712.9 L350.8 720.3 L363.2 715.8 L375.6 702.5 L385.9 696.4 L396.2 700.5 L406.5 704.6 L412.7 715.8 L421.0 708.7 L431.3 714.9 L437.5 731.4 L445.7 756.2 L449.9 793.3 L451.1 832.6" fill="none" stroke="#10d820" stroke-width="1.6" stroke-linejoin="round"/>
</svg>
 <div class="abs t14" style="left:128px;top:663px;white-space:nowrap">dB range:</div>
 <div class="inp" style="left:194px;top:656px;width:48px;height:30px;line-height:30px">60</div>
 <div class="inp" style="left:250px;top:656px;width:48px;height:30px;line-height:30px">110</div>
 <div class="btn" style="left:306px;top:654px;width:54px;height:34px;line-height:32px;font-size:14px">auto</div>
 <div class="abs" style="left:137px;top:712px;white-space:nowrap;font-size:14px">Smoothing:</div>
 <div class="abs" style="left:216px;top:704px;width:135px;height:31px;background:#666;font-size:14px;line-height:33px;padding-left:16px;white-space:nowrap">1/3 Octave<svg class="abs" style="left:122px;top:10px" width="8" height="7"><path d="M0 0 H7 L3.5 6 Z" fill="#fff"/></svg></div>
</div>
<div id="bot">
 <div class="tabb" style="top:1px;width:106px;padding-left:26px">SPL Control<svg class="abs" style="left:12px;top:15px" width="9" height="6"><path d="M0 0 H8 L4 5 Z" fill="#fff"/></svg></div>
 <div class="tabb" style="top:82px;width:86px;padding-left:26px">Cutview<svg class="abs" style="left:13px;top:12px" width="6" height="10"><path d="M0 0 L5 4.5 L0 9 Z" fill="#fff"/></svg></div>
 <span class="t" style="left:453px;top:14px">Zoom Camera</span>
 <div class="abs" style="left:536px;top:18px;width:269px;height:5px;background:#a9a9a9"></div>
 <div class="abs" style="left:750px;top:9px;width:12px;height:22px;background:#c9c5c0;border:1px solid #8f8f8f;border-radius:2px"><i style="position:absolute;left:2px;top:7px;width:6px;height:1px;background:#888;box-shadow:0 2px 0 #888,0 4px 0 #888"></i></div>
 <div class="b2" style="left:813px;top:2px;width:178px;height:36px;background:#064a70;border-bottom:3px solid #1590d2;line-height:37px;padding-left:22px">
   <svg class="abs" style="left:21px;top:10px" width="16" height="15" viewBox="0 0 16 15"><path d="M11 8.5 V12.5 H2.5 V3.5 H9" fill="none" stroke="#fff" stroke-width="1.5"/><path d="M5 7 L7.5 9.8 L13.5 2.5" fill="none" stroke="#fff" stroke-width="2"/></svg>Air absorption: ON</div>
 <div class="b2" style="left:992px;top:2px;width:140px;height:35px;background:#3a3a3a;border-bottom:2px solid #141414;line-height:37px;padding-left:22px">
   <svg class="abs" style="left:13px;top:12px" width="12" height="12" viewBox="0 0 12 12"><rect x="1" y="1" width="10" height="10" rx="2" fill="none" stroke="#fff" stroke-width="1.4"/></svg>Auto-apply SPL</div>
 <div class="b2" style="left:1137px;top:2px;width:178px;height:36px;background:#3a3a3a;border:1px solid #151515;line-height:35px">Update Prediction</div>
 <span class="t" style="left:107px;top:52px">Frequency Band</span>
 <div class="b2" style="left:208px;top:39px;width:94px;height:37px;background:#2088b5;line-height:40px">Broadband</div>
 <div class="b2" style="left:306px;top:39px;width:102px;height:37px;background:#064a70;border:1px solid #0a1a24;line-height:38px">Vocal Range</div>
 <div class="b2" style="left:412px;top:39px;width:92px;height:37px;background:#064a70;border:1px solid #0a1a24;line-height:38px">Subwoofer</div>
 <div class="abs" style="left:512px;top:40px;width:63px;height:36px;background:#f4f4f4;color:#777;font-size:12.5px;line-height:36px;text-align:center">From Hz</div>
 <div class="abs" style="left:575px;top:40px;width:80px;height:36px;background:#666;color:#eee;font-size:12.5px;line-height:36px;padding-left:8px;border:1px solid #2a2a2a;border-left:0">30</div>
 <div class="abs" style="left:659px;top:40px;width:47px;height:36px;background:#f4f4f4;color:#777;font-size:12.5px;line-height:36px;text-align:center">To Hz</div>
 <div class="abs" style="left:706px;top:40px;width:80px;height:36px;background:#666;color:#eee;font-size:12.5px;line-height:36px;padding-left:8px;border:1px solid #2a2a2a;border-left:0">10000</div>
 <span class="t" style="left:380px;top:93px">dB range:</span>
 <div class="abs" style="left:439px;top:82px;width:60px;height:35px;background:#666;font-size:14.5px;line-height:36px;padding-left:13px;border-right:1px solid #444">97</div>
 <div class="abs" style="left:499px;top:82px;width:60px;height:35px;background:#666;font-size:14.5px;line-height:36px;padding-left:14px">137</div>
 <div class="b2" style="left:560px;top:82px;width:55px;height:35px;background:#064a70;border:1px solid #0a1a24;line-height:34px">Auto</div>
 <span class="t" style="left:623px;top:93px">When linked:</span>
 <div class="abs" style="left:707px;top:82px;width:98px;height:35px;background:#3a3a3a;font-size:14.5px;line-height:36px;padding-left:14px;white-space:nowrap">+20 dB<svg class="abs" style="left:78px;top:12px" width="7" height="12"><path d="M0 5 L3.5 1 L7 5 Z M0 7.5 L3.5 11.5 L7 7.5 Z" fill="#4c4c4c"/></svg></div>
 <div class="abs" style="left:812px;top:82px;width:320px;height:35px;background:#3a3a3a;font-size:14.5px;line-height:36px;padding-left:12px;white-space:nowrap">Cluster 1<svg class="abs" style="left:300px;top:12px" width="7" height="12"><path d="M0 5 L3.5 1 L7 5 Z M0 7.5 L3.5 11.5 L7 7.5 Z" fill="#4c4c4c"/></svg></div>
 <div class="b2" style="left:1137px;top:82px;width:178px;height:35px;background:#3a3a3a;line-height:36px">Update Prediction</div>
</div>
<div id="tools">
 <div class="hd" style="top:0px;height:17px">Tools</div>
 <div class="it" style="top:17px;line-height:29px"><svg width="16" height="16" viewBox="0 0 16 16"><circle cx="8" cy="8" r="7" fill="#b5b5b5"/><path d="M5 3.5 L8.5 3 L9.5 5.5 L7.5 8.5 L9.5 11 L8 13.5 L6 10.5 L4.5 8 Z M11 4 L13.5 6.5 L12.5 9.5 L11 7.5 Z" fill="#333"/></svg>World</div>
 <div class="it on" style="top:47px;height:30px;line-height:30px"><svg width="16" height="16" viewBox="0 0 16 16"><path d="M8 0.5 L10.8 3.8 H9 V7 H12.2 V5.2 L15.5 8 L12.2 10.8 V9 H9 V12.2 H10.8 L8 15.5 L5.2 12.2 H7 V9 H3.8 V10.8 L0.5 8 L3.8 5.2 V7 H7 V3.8 H5.2 Z" fill="#c7d0d7"/></svg>Move</div>
 <div class="it" style="top:78px;line-height:21px"><svg style="top:8px" width="17" height="18" viewBox="0 0 17 18"><path d="M8.5 1 V17 M6 3 H11 V15 H6 Z" fill="none" stroke="#b5b5b5" stroke-width="1.3"/><path d="M4 6.5 C1 7.5 1 11 4.5 11.5 M13 6.5 C16 7.5 16 11 12.5 11.5 M3 10 L4.8 11.6 L3.2 13.2" fill="none" stroke="#b5b5b5" stroke-width="1.3"/></svg>Rotate</div>
 <div class="it" style="top:107px"><svg width="16" height="16" viewBox="0 0 16 16"><path d="M9.5 1.5 H14.5 V6.5 L12.8 4.8 L9.8 7.8 L8.2 6.2 L11.2 3.2 Z M6.5 14.5 H1.5 V9.5 L3.2 11.2 L6.2 8.2 L7.8 9.8 L4.8 12.8 Z" fill="#c4c4c4"/></svg>Scale</div>
 <div class="it on sn" style="top:137px">Snap grid<b style="height:29px;border-bottom:2px solid #4c4c4c">1</b></div>
 <div class="it on sn" style="top:167px">Snap ang.<b style="height:29px;border-bottom:2px solid #4c4c4c">5</b></div>
 <div class="it sn" style="top:197px">Snap obj.<b>0.5</b></div>
 <div class="it" style="top:227px"><svg width="17" height="15" viewBox="0 0 17 15"><path d="M1 4 a1.5 1.5 0 0 1 1.5 -1.5 H4.5 L6 0.5 H11 L12.5 2.5 H14.5 A1.5 1.5 0 0 1 16 4 V12.5 a1.5 1.5 0 0 1 -1.5 1.5 H2.5 A1.5 1.5 0 0 1 1 12.5 Z" fill="#bdbdbd"/><circle cx="8.5" cy="8" r="3.6" fill="#333"/><circle cx="8.5" cy="8" r="2.2" fill="#bdbdbd"/></svg>Picture</div>
 <div class="it" style="top:257px"><svg width="17" height="15" viewBox="0 0 17 15"><path d="M1 4 a1.5 1.5 0 0 1 1.5 -1.5 H4.5 L6 0.5 H11 L12.5 2.5 H14.5 A1.5 1.5 0 0 1 16 4 V12.5 a1.5 1.5 0 0 1 -1.5 1.5 H2.5 A1.5 1.5 0 0 1 1 12.5 Z" fill="#bdbdbd"/><circle cx="8.5" cy="8" r="3.6" fill="#333"/><circle cx="8.5" cy="8" r="2.2" fill="#bdbdbd"/></svg>Slideshow</div>
 <div class="hd" style="top:287px">Visual Layer</div>
 <div class="it on" style="top:303px"><svg width="16" height="15" viewBox="0 0 16 15"><path d="M11 8.5 V12.5 H2 V3 H9" fill="none" stroke="#c7d0d7" stroke-width="1.5"/><path d="M4.5 6.5 L7.2 9.5 L13.5 2" fill="none" stroke="#c7d0d7" stroke-width="2"/></svg>Grid</div>
<div class="it on" style="top:333px"><svg width="16" height="15" viewBox="0 0 16 15"><path d="M11 8.5 V12.5 H2 V3 H9" fill="none" stroke="#c7d0d7" stroke-width="1.5"/><path d="M4.5 6.5 L7.2 9.5 L13.5 2" fill="none" stroke="#c7d0d7" stroke-width="2"/></svg>Grid Axes</div>
<div class="it on" style="top:363px"><svg width="16" height="15" viewBox="0 0 16 15"><path d="M11 8.5 V12.5 H2 V3 H9" fill="none" stroke="#c7d0d7" stroke-width="1.5"/><path d="M4.5 6.5 L7.2 9.5 L13.5 2" fill="none" stroke="#c7d0d7" stroke-width="2"/></svg>Perspective</div>
<div class="it on" style="top:393px"><svg width="16" height="15" viewBox="0 0 16 15"><path d="M11 8.5 V12.5 H2 V3 H9" fill="none" stroke="#c7d0d7" stroke-width="1.5"/><path d="M4.5 6.5 L7.2 9.5 L13.5 2" fill="none" stroke="#c7d0d7" stroke-width="2"/></svg>Polar</div>
<div class="it on" style="top:423px"><svg width="16" height="15" viewBox="0 0 16 15"><path d="M11 8.5 V12.5 H2 V3 H9" fill="none" stroke="#c7d0d7" stroke-width="1.5"/><path d="M4.5 6.5 L7.2 9.5 L13.5 2" fill="none" stroke="#c7d0d7" stroke-width="2"/></svg>Rays</div>
<div class="it" style="top:453px"><svg width="16" height="15" viewBox="0 0 16 15"><rect x="2" y="2.5" width="10" height="10" rx="2" fill="none" stroke="#b5b5b5" stroke-width="1.4"/></svg>Quick map</div>
</div>
</body></html>
